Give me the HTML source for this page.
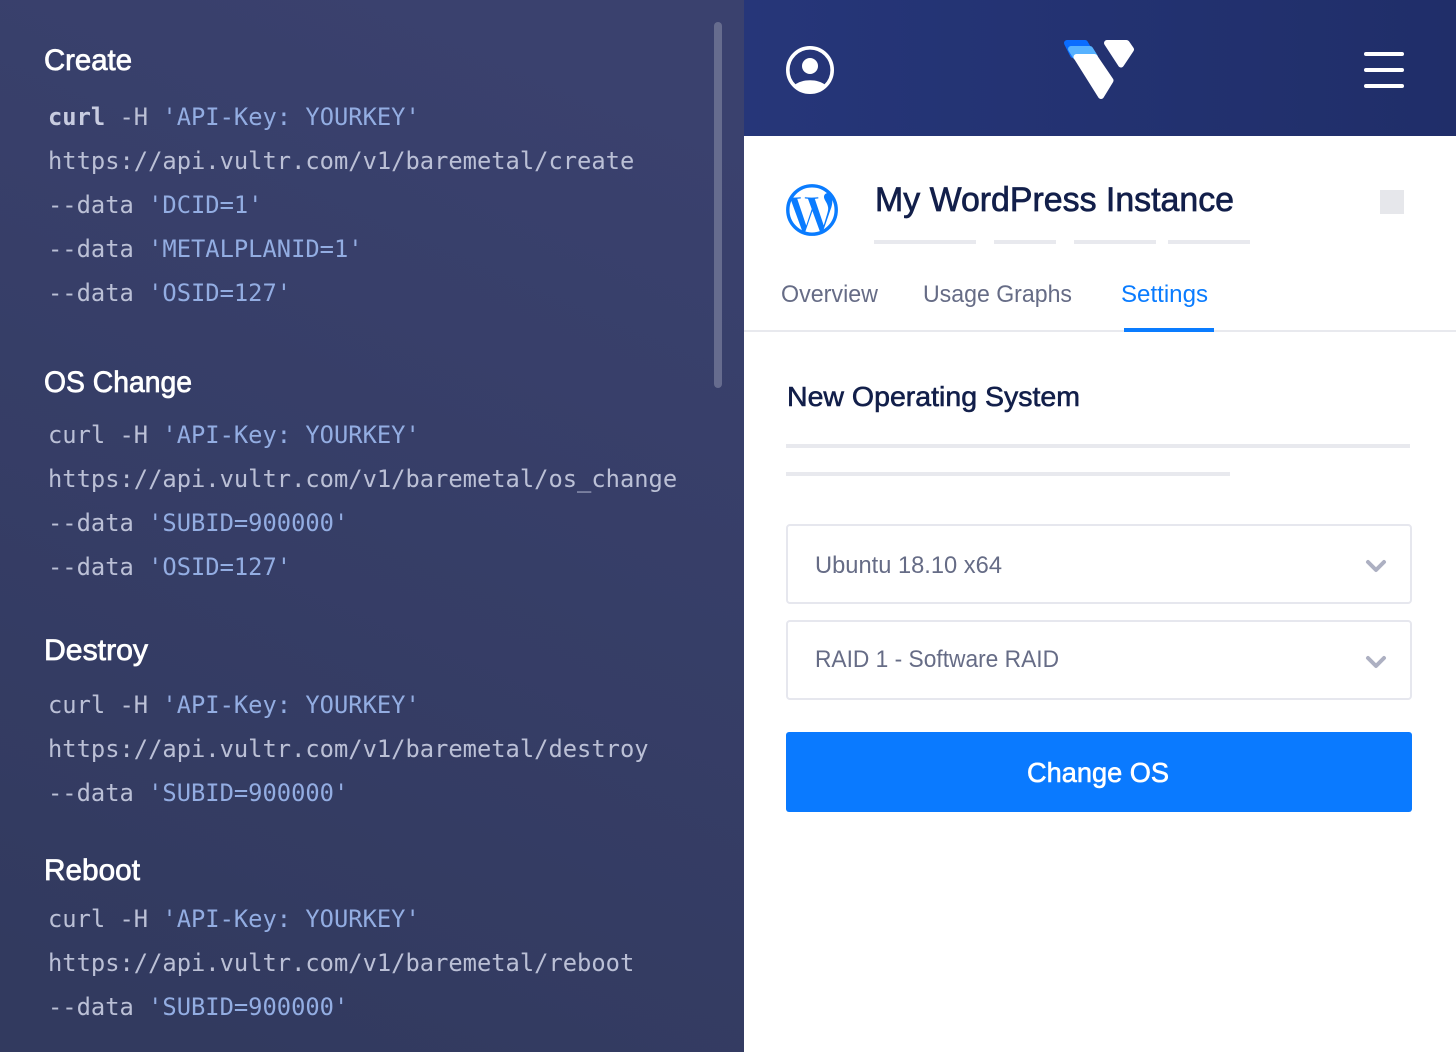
<!DOCTYPE html>
<html lang="en"><head><meta charset="utf-8"><title>Vultr API</title>
<style>
html,body{margin:0;padding:0;width:1456px;height:1052px;overflow:hidden;background:#fff}
svg{display:block}
.h{font:normal 30px "Liberation Sans",sans-serif;fill:#fff;stroke:#fff;stroke-width:.75px}
.c{font:normal 23.75px "DejaVu Sans Mono","Liberation Mono",monospace;fill:#bbc0d6}
.c tspan{fill:#93ade2}
.s{font-family:"Liberation Sans",sans-serif}
</style></head><body>
<svg width="1456" height="1052" viewBox="0 0 1456 1052" xmlns="http://www.w3.org/2000/svg">
<defs>
<linearGradient id="l" x1=".6" y1="0" x2=".3" y2="1"><stop offset="0" stop-color="#3a416e"/><stop offset="1" stop-color="#323a5f"/></linearGradient>
<linearGradient id="t" x1="0" y1="0" x2="1" y2="0"><stop offset="0" stop-color="#263679"/><stop offset="1" stop-color="#202e69"/></linearGradient>
</defs>
<rect width="744" height="1052" fill="url(#l)"/>
<rect x="714" y="22" width="8" height="366" rx="4" fill="#666c8e"/>

<text class="h" x="44" y="70" textLength="88" lengthAdjust="spacingAndGlyphs">Create</text>
<text class="c" x="48" y="125"><tspan style="fill:#c8cce0;font-weight:bold">curl</tspan> -H <tspan>'API-Key: YOURKEY'</tspan></text>
<text class="c" x="48" y="169">https://api.vultr.com/v1/baremetal/create</text>
<text class="c" x="48" y="213">--data <tspan>'DCID=1'</tspan></text>
<text class="c" x="48" y="257">--data <tspan>'METALPLANID=1'</tspan></text>
<text class="c" x="48" y="301">--data <tspan>'OSID=127'</tspan></text>

<text class="h" x="44" y="392" textLength="148" lengthAdjust="spacingAndGlyphs">OS Change</text>
<text class="c" x="48" y="443">curl -H <tspan>'API-Key: YOURKEY'</tspan></text>
<text class="c" x="48" y="487">https://api.vultr.com/v1/baremetal/os_change</text>
<text class="c" x="48" y="531">--data <tspan>'SUBID=900000'</tspan></text>
<text class="c" x="48" y="575">--data <tspan>'OSID=127'</tspan></text>

<text class="h" x="44" y="660" textLength="104" lengthAdjust="spacingAndGlyphs">Destroy</text>
<text class="c" x="48" y="713">curl -H <tspan>'API-Key: YOURKEY'</tspan></text>
<text class="c" x="48" y="757">https://api.vultr.com/v1/baremetal/destroy</text>
<text class="c" x="48" y="801">--data <tspan>'SUBID=900000'</tspan></text>

<text class="h" x="44" y="880" textLength="96" lengthAdjust="spacingAndGlyphs">Reboot</text>
<text class="c" x="48" y="927">curl -H <tspan>'API-Key: YOURKEY'</tspan></text>
<text class="c" x="48" y="971">https://api.vultr.com/v1/baremetal/reboot</text>
<text class="c" x="48" y="1015">--data <tspan>'SUBID=900000'</tspan></text>

<rect x="744" width="712" height="136" fill="url(#t)"/>
<circle cx="810" cy="70" r="22.200" fill="none" stroke="#fff" stroke-width="3.600"/>
<circle cx="810" cy="66" r="8" fill="#fff"/>
<path d="M794.500 85c4-3.200 9.500-4.800 15.500-4.800s11.500 1.600 15.500 4.800c-4 4.600-9.500 7.500-15.500 7.500s-11.500-2.900-15.500-7.500z" fill="#fff"/>

<path d="M1067 43h18l7 12h-19z" fill="#0a6dff" stroke="#0a6dff" stroke-width="6" stroke-linejoin="round"/>
<path d="M1071 49h19l5 8h-19z" fill="#57b2ff" stroke="#57b2ff" stroke-width="6" stroke-linejoin="round"/>
<path d="M1076.500 57h18l16 23.500-9.500 15.500z" fill="#fff" stroke="#fff" stroke-width="6" stroke-linejoin="round"/>
<path d="M1107 43h19.500l4.500 6.500-10 15z" fill="#fff" stroke="#fff" stroke-width="6" stroke-linejoin="round"/>

<rect x="1364" y="52" width="40" height="4" rx="2" fill="#fff"/>
<rect x="1364" y="68" width="40" height="4" rx="2" fill="#fff"/>
<rect x="1364" y="84" width="40" height="4" rx="2" fill="#fff"/>

<g transform="translate(785.200 183.200) scale(.1048)" fill="#0a7cff" stroke="#fff" stroke-width="7"><path d="M256 8C119.300 8 8 119.200 8 256c0 136.700 111.300 248 248 248s248-111.300 248-248C504 119.200 392.700 8 256 8zM33 256c0-32.300 6.900-63 19.300-90.700l106.400 291.400C84.300 420.500 33 344.200 33 256zm223 223c-21.900 0-43-3.200-63-9.100l66.900-194.400 68.500 187.800c.5 1.100 1 2.100 1.600 3.100-23.100 8.100-48 12.600-74 12.600zm30.700-327.500c13.400-.7 25.500-2.100 25.500-2.100 12-1.400 10.600-19.100-1.400-18.400 0 0-36.100 2.800-59.400 2.800-21.900 0-58.700-2.800-58.700-2.800-12-.7-13.400 17.700-1.400 18.400 0 0 11.400 1.400 23.400 2.100l34.700 95.200L200.600 393l-81.200-241.500c13.400-.7 25.500-2.100 25.500-2.100 12-1.400 10.600-19.100-1.400-18.400 0 0-36.100 2.800-59.400 2.800-4.200 0-9.100-.1-14.400-.3C109.600 73 178.100 33 256 33c58 0 110.900 22.200 150.600 58.500-1-.1-1.900-.2-2.900-.2-21.900 0-37.400 19.100-37.400 39.600 0 18.400 10.600 33.900 21.900 52.300 8.500 14.800 18.400 33.900 18.400 61.500 0 19.100-7.300 41.200-17 72.100l-22.200 74.300-80.700-240.100zm81.400 297.200l68.100-196.900c12.700-31.800 17-57.200 17-79.900 0-8.200-.5-15.800-1.500-22.900 17.400 31.800 27.300 68.200 27.300 107 0 82.300-44.600 154.100-110.900 192.700z"/></g>
<circle cx="812" cy="210" r="24.200" fill="none" stroke="#0a7cff" stroke-width="3.400"/>

<text class="s" x="875" y="211" font-size="34" fill="#121f4a" stroke="#121f4a" stroke-width=".7" textLength="359" lengthAdjust="spacingAndGlyphs">My WordPress Instance</text>
<rect x="874" y="240" width="102" height="4" fill="#e8e9ee"/>
<rect x="994" y="240" width="62" height="4" fill="#e8e9ee"/>
<rect x="1074" y="240" width="82" height="4" fill="#e8e9ee"/>
<rect x="1168" y="240" width="82" height="4" fill="#e8e9ee"/>
<rect x="1380" y="190" width="24" height="24" fill="#e6e7eb"/>

<text class="s" x="781" y="302" font-size="24.500" fill="#666c86" textLength="97" lengthAdjust="spacingAndGlyphs">Overview</text>
<text class="s" x="923" y="302" font-size="24.500" fill="#666c86" textLength="149" lengthAdjust="spacingAndGlyphs">Usage Graphs</text>
<text class="s" x="1121" y="302" font-size="24.500" fill="#0a7cff" textLength="87" lengthAdjust="spacingAndGlyphs">Settings</text>
<rect x="744" y="330" width="712" height="2" fill="#e8e9ee"/>
<rect x="1124" y="328" width="90" height="4" fill="#0a7cff"/>

<text class="s" x="787" y="406" font-size="28" fill="#121f4a" stroke="#121f4a" stroke-width=".6" textLength="293" lengthAdjust="spacingAndGlyphs">New Operating System</text>
<rect x="786" y="444" width="624" height="4" fill="#e8e9ee"/>
<rect x="786" y="472" width="444" height="4" fill="#e8e9ee"/>

<rect x="787" y="525" width="624" height="78" rx="3" fill="#fff" stroke="#e6e7ee" stroke-width="2"/>
<text class="s" x="815" y="573" font-size="24.500" fill="#666c86" textLength="187" lengthAdjust="spacingAndGlyphs">Ubuntu 18.10 x64</text>
<path d="M1368 562l8 8 8-8" fill="none" stroke="#adb0c2" stroke-width="4" stroke-linecap="round" stroke-linejoin="round"/>
<rect x="787" y="621" width="624" height="78" rx="3" fill="#fff" stroke="#e6e7ee" stroke-width="2"/>
<text class="s" x="815" y="667" font-size="24.500" fill="#666c86" textLength="244" lengthAdjust="spacingAndGlyphs">RAID 1 - Software RAID</text>
<path d="M1368 658l8 8 8-8" fill="none" stroke="#adb0c2" stroke-width="4" stroke-linecap="round" stroke-linejoin="round"/>

<rect x="786" y="732" width="626" height="80" rx="3" fill="#0a7aff"/>
<text class="s" x="1027" y="782" font-size="28" fill="#fff" stroke="#fff" stroke-width=".6" textLength="142" lengthAdjust="spacingAndGlyphs">Change OS</text>
</svg>
</body></html>
